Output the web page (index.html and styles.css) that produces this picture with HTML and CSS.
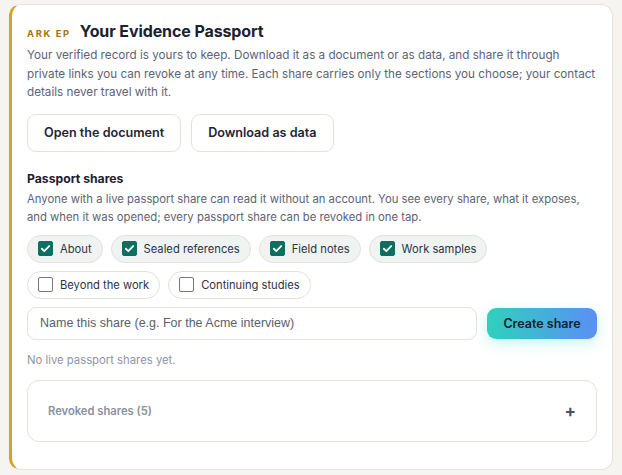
FILE: index.html
```html
<!DOCTYPE html>
<html lang="en">
<head>
<meta charset="utf-8">
<title>Your Evidence Passport</title>
<link rel="stylesheet" href="styles.css">
</head>
<body>
<section class="card">
  <header class="head">
    <span class="eyebrow">ARK EP</span>
    <h2 class="title">Your Evidence Passport</h2>
  </header>
  <p class="lead">Your verified record is yours to keep. Download it as a document or as data, and share it through private links you can revoke at any time. Each share carries only the sections you choose; your contact details never travel with it.</p>
  <div class="actions">
    <button class="btn">Open the document</button>
    <button class="btn">Download as data</button>
  </div>

  <h3 class="subtitle">Passport shares</h3>
  <p class="lead small">Anyone with a live passport share can read it without an account. You see every share, what it exposes, and when it was opened; every passport share can be revoked in one tap.</p>

  <div class="chips">
    <label class="chip on"><span class="box"><svg viewBox="0 0 16 16"><path d="M3.5 8.3l3 3 6-6.3" fill="none" stroke="#fff" stroke-width="2.2" stroke-linecap="round" stroke-linejoin="round"/></svg></span>About</label>
    <label class="chip on"><span class="box"><svg viewBox="0 0 16 16"><path d="M3.5 8.3l3 3 6-6.3" fill="none" stroke="#fff" stroke-width="2.2" stroke-linecap="round" stroke-linejoin="round"/></svg></span>Sealed references</label>
    <label class="chip on"><span class="box"><svg viewBox="0 0 16 16"><path d="M3.5 8.3l3 3 6-6.3" fill="none" stroke="#fff" stroke-width="2.2" stroke-linecap="round" stroke-linejoin="round"/></svg></span>Field notes</label>
    <label class="chip on"><span class="box"><svg viewBox="0 0 16 16"><path d="M3.5 8.3l3 3 6-6.3" fill="none" stroke="#fff" stroke-width="2.2" stroke-linecap="round" stroke-linejoin="round"/></svg></span>Work samples</label>
    <label class="chip"><span class="box"></span>Beyond the work</label>
    <label class="chip"><span class="box"></span>Continuing studies</label>
  </div>

  <div class="create">
    <input class="name" type="text" placeholder="Name this share (e.g. For the Acme interview)">
    <button class="primary">Create share</button>
  </div>

  <p class="empty">No live passport shares yet.</p>

  <div class="revoked">
    <span class="revoked-label">Revoked shares (5)</span>
    <span class="plus">+</span>
  </div>
</section>
</body>
</html>
```

FILE: styles.css
```css
* { box-sizing: border-box; }
html, body { margin: 0; padding: 0; }
body {
  background: #f6f4f0;
  font-family: Inter, "Noto Sans", sans-serif;
  color: #1f2533;
  padding: 4px 9px 7px 9px;
}
.card {
  background: #fff;
  border: 1px solid #e7e3db;
  border-left: 3px solid #d2a32c;
  border-radius: 12px;
  padding: 16px 15px 27px 15px;
}
.head {
  display: flex;
  align-items: baseline;
  gap: 9px;
}
.eyebrow {
  font-size: 9.3px;
  font-weight: 700;
  letter-spacing: 1.7px;
  color: #a8720c;
}
.title {
  margin: 0;
  font-size: 16px;
  font-weight: 700;
  color: #1b2130;
  letter-spacing: -0.1px;
}
.lead {
  margin: 5px 0 0 0;
  font-size: 11.7px;
  line-height: 18.5px;
  color: #5c6374;
}
.actions {
  display: flex;
  gap: 10px;
  margin-top: 12px;
}
.btn {
  font-family: Inter, sans-serif;
  font-size: 12.6px;
  font-weight: 600;
  color: #1e2535;
  background: #fff;
  border: 1px solid #e5e2da;
  border-radius: 9px;
  height: 38px;
  padding: 0 16px;
}
.subtitle {
  margin: 19px 0 0 0;
  font-size: 12.2px;
  font-weight: 700;
  color: #1b2130;
}
.lead.small {
  margin-top: 4px;
  font-size: 11.3px;
  line-height: 18px;
}
.chips {
  display: flex;
  flex-wrap: wrap;
  gap: 8px;
  margin-top: 9px;
}
.chip {
  display: inline-flex;
  align-items: center;
  gap: 7px;
  height: 28px;
  padding: 0 10px;
  border: 1px solid #e3e1da;
  border-radius: 14px;
  background: #fff;
  font-size: 11.2px;
  color: #2d3446;
}
.chip.on { background: #eff3f2; }
.box {
  width: 15px;
  height: 15px;
  border-radius: 2px;
  border: 1px solid #767676;
  background: #fff;
  display: inline-flex;
}
.chip.on .box {
  background: #0e6e60;
  border-color: #0e6e60;
}
.box svg { width: 13px; height: 13px; }
.create {
  display: flex;
  gap: 10px;
  align-items: center;
  margin-top: 8px;
}
.name {
  flex: 1;
  height: 33px;
  border: 1px solid #e5e2da;
  border-radius: 9px;
  padding: 0 12px;
  font-family: "Liberation Sans", Arial, sans-serif;
  font-size: 12.5px;
  color: #1f2533;
  background: #fff;
}
.name::placeholder { color: #5a5f6a; }
.primary {
  width: 110px;
  height: 31px;
  border: none;
  border-radius: 9px;
  background: linear-gradient(90deg, #2fd1bd 0%, #5a8ff5 100%);
  box-shadow: 0 4px 14px rgba(45, 212, 191, 0.28);
  font-family: Inter, sans-serif;
  font-size: 12.5px;
  font-weight: 600;
  color: #14202e;
}
.empty {
  margin: 13px 0 0 0;
  font-size: 11.3px;
  color: #8e96a6;
}
.revoked {
  margin-top: 13px;
  height: 62px;
  border: 1px solid #e5e2da;
  border-radius: 12px;
  display: flex;
  align-items: center;
  justify-content: space-between;
  padding: 0 20px 0 20px;
}
.revoked-label {
  font-size: 11.2px;
  font-weight: 600;
  color: #8890a2;
}
.plus {
  font-size: 17px;
  font-weight: 700;
  color: #4a5366;
}
```
